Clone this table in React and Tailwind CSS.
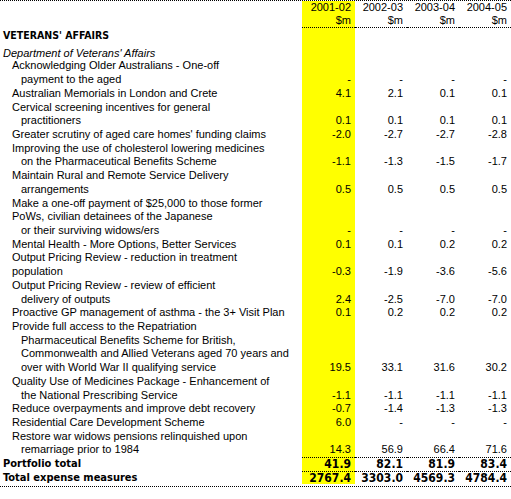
const body = { fontFamily: '"Liberation Sans", Arial, sans-serif' };
const heavy = { fontFamily: '"DejaVu Sans Condensed", "DejaVu Sans", sans-serif' };

const rows = [
  { t: 'Acknowledging Older Australians - One-off', i: 1 },
  { t: 'payment to the aged', i: 2, v: ['-', '-', '-', '-'] },
  { t: 'Australian Memorials in London and Crete', i: 1, v: ['4.1', '2.1', '0.1', '0.1'] },
  { t: 'Cervical screening incentives for general', i: 1 },
  { t: 'practitioners', i: 2, v: ['0.1', '0.1', '0.1', '0.1'] },
  { t: "Greater scrutiny of aged care homes' funding claims", i: 1, v: ['-2.0', '-2.7', '-2.7', '-2.8'] },
  { t: 'Improving the use of cholesterol lowering medicines', i: 1 },
  { t: 'on the Pharmaceutical Benefits Scheme', i: 2, v: ['-1.1', '-1.3', '-1.5', '-1.7'] },
  { t: 'Maintain Rural and Remote Service Delivery', i: 1 },
  { t: 'arrangements', i: 2, v: ['0.5', '0.5', '0.5', '0.5'] },
  { t: 'Make a one-off payment of $25,000 to those former', i: 1 },
  { t: 'PoWs, civilian detainees of the Japanese', i: 1 },
  { t: 'or their surviving widows/ers', i: 2, v: ['-', '-', '-', '-'] },
  { t: 'Mental Health - More Options, Better Services', i: 1, v: ['0.1', '0.1', '0.2', '0.2'] },
  { t: 'Output Pricing Review - reduction in treatment', i: 1 },
  { t: 'population', i: 1, v: ['-0.3', '-1.9', '-3.6', '-5.6'] },
  { t: 'Output Pricing Review - review of efficient', i: 1 },
  { t: 'delivery of outputs', i: 2, v: ['2.4', '-2.5', '-7.0', '-7.0'] },
  { t: 'Proactive GP management of asthma - the 3+ Visit Plan', i: 1, v: ['0.1', '0.2', '0.2', '0.2'] },
  { t: 'Provide full access to the Repatriation', i: 1 },
  { t: 'Pharmaceutical Benefits Scheme for British,', i: 2 },
  { t: 'Commonwealth and Allied Veterans aged 70 years and', i: 2 },
  { t: 'over with World War II qualifying service', i: 2, v: ['19.5', '33.1', '31.6', '30.2'] },
  { t: 'Quality Use of Medicines Package - Enhancement of', i: 1 },
  { t: 'the National Prescribing Service', i: 2, v: ['-1.1', '-1.1', '-1.1', '-1.1'] },
  { t: 'Reduce overpayments and improve debt recovery', i: 1, v: ['-0.7', '-1.4', '-1.3', '-1.3'] },
  { t: 'Residential Care Development Scheme', i: 1, v: ['6.0', '-', '-', '-'] },
  { t: 'Restore war widows pensions relinquished upon', i: 1 },
  { t: 'remarriage prior to 1984', i: 2, v: ['14.3', '56.9', '66.4', '71.6'] },
];

const colW = ['w-[53px]', 'w-[52px]', 'w-[52px]', 'w-[52px]'];

function Cells({ values = ['', '', '', ''], className = '', style = body }) {
  return values.map((v, k) => (
    <div
      key={k}
      style={style}
      className={`${colW[k]} flex h-full items-center justify-end pr-[4px] ${k === 0 ? 'bg-[#ffff00]' : ''} ${className}`}
    >
      {v}
    </div>
  ));
}

function Row({ children, values, h, cellClass, cellStyle }) {
  return (
    <div className={`flex ${h}`}>
      <div className="flex w-[302px] items-center whitespace-nowrap">{children}</div>
      <Cells values={values} className={cellClass} style={cellStyle} />
    </div>
  );
}

export default function App() {
  return (
    <div className="w-[511px] bg-white text-[11px] leading-none text-black" style={body}>
      <div className="border-t border-dotted border-black" />
      <Row h="h-[13px]" values={['2001-02', '2002-03', '2003-04', '2004-05']} />
      <Row h="h-[14px]" values={['$m', '$m', '$m', '$m']} cellClass="border-b border-dotted border-black" />
      <Row h="h-[14px]">
        <span style={heavy} className="pl-[3px] text-[10.5px] font-bold">VETERANS' AFFAIRS</span>
      </Row>
      <Row h="h-[17px]" cellClass="pt-[5px]">
        <span className="pl-[3px] pt-[5px] italic">Department of Veterans' Affairs</span>
      </Row>
      {rows.map((r, n) => (
        <Row key={n} h="h-[13.72px]" values={r.v}>
          <span className={r.i === 2 ? 'pl-[21px]' : 'pl-[12px]'}>{r.t}</span>
        </Row>
      ))}
      <Row
        h="h-[14px]"
        values={['41.9', '82.1', '81.9', '83.4']}
        cellClass="border-t border-dotted border-black text-[12px] font-bold"
        cellStyle={heavy}
      >
        <span style={heavy} className="pl-[3px] text-[11px] font-bold">Portfolio total</span>
      </Row>
      <Row
        h="h-[13px]"
        values={['2767.4', '3303.0', '4569.3', '4784.4']}
        cellClass="border-t border-dotted border-black text-[12px] font-bold"
        cellStyle={heavy}
      >
        <span style={heavy} className="pl-[3px] text-[11px] font-bold">Total expense measures</span>
      </Row>
      <div className="mt-[2px] border-t border-dotted border-black" />
    </div>
  );
}
